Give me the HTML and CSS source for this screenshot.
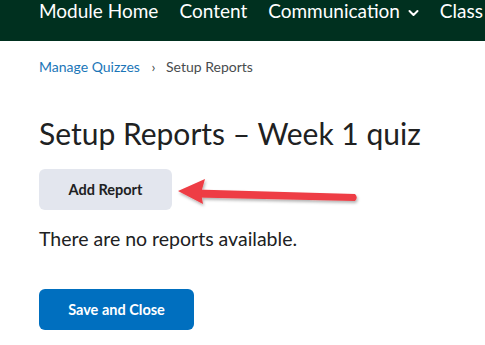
FILE: index.html
```html
<!DOCTYPE html>
<html lang="en">
<head>
    <meta charset="UTF-8">
    <title>Setup Reports</title>
    <link rel="stylesheet" href="styles.css">
</head>
<body>
    <nav class="navbar">
        <a href="#">Module Home</a>
        <a href="#">Content</a>
        <a href="#">Communication <svg class="caret" width="11" height="8" viewBox="0 0 11 8"><path d="M1.5 2 L5.5 6 L9.5 2" fill="none" stroke="#fff" stroke-width="2" stroke-linecap="round" stroke-linejoin="round"/></svg></a>
        <a href="#">Class</a>
    </nav>
    <main class="page">
        <div class="breadcrumb">
            <a href="#">Manage Quizzes</a>
            <span class="sep">›</span>
            <span>Setup Reports</span>
        </div>
        <h1>Setup Reports – Week 1 quiz</h1>
        <div class="add-row">
            <button class="btn">Add Report</button>
            <svg class="arrow" width="190" height="40" viewBox="0 0 190 40">
                <defs>
                    <filter id="sh" x="-10%" y="-30%" width="120%" height="160%">
                        <feDropShadow dx="1" dy="2" stdDeviation="1.5" flood-color="#000" flood-opacity="0.3"/>
                    </filter>
                </defs>
                <g filter="url(#sh)" fill="#ee3d44">
                    <path d="M22 18.5 L181 23 Q184.5 26.5 181 30 L22 26.5 Z"/>
                    <path d="M4 20 L31 8 L27 22 L29 33 Z"/>
                </g>
            </svg>
        </div>
        <p class="empty">There are no reports available.</p>
        <button class="btn btn-primary">Save and Close</button>
    </main>
</body>
</html>
```

FILE: styles.css
```css
body {
    margin: 0;
    font-family: Lato, "Open Sans", sans-serif;
    color: #202122;
    background: #fff;
}
.navbar {
    background-color: #00301f;
    height: 41px;
    display: flex;
    gap: 21px;
    padding-left: 39px;
    white-space: nowrap;
    overflow: hidden;
}
.navbar a {
    color: #fff;
    text-decoration: none;
    font-size: 19px;
    line-height: 22px;
}
.caret {
    margin-left: 3px;
    vertical-align: 1px;
}
.page {
    padding: 0 39px;
}
.breadcrumb {
    font-size: 14px;
    margin-top: 17px;
    line-height: 18px;
    color: #494c4e;
}
.breadcrumb a {
    color: #1b76b8;
    text-decoration: none;
}
.breadcrumb .sep {
    margin: 0 7px 0 8px;
}
h1 {
    font-weight: 400;
    font-size: 30px;
    line-height: 36px;
    margin: 39px 0 16px;
}
.add-row {
    display: flex;
    align-items: center;
}
.btn {
    font-family: inherit;
    font-weight: 700;
    font-size: 14.5px;
    border: none;
    border-radius: 6px;
    height: 41px;
    padding: 0;
    background-color: #e3e6ee;
    color: #202122;
}
.add-row .btn {
    width: 133px;
}
.arrow {
    margin-left: 2px;
    margin-top: 4px;
}
.empty {
    font-size: 19.5px;
    line-height: 24px;
    margin: 16px 0 38px;
}
.btn-primary {
    background-color: #006fbf;
    color: #fff;
    width: 155px;
}
```
